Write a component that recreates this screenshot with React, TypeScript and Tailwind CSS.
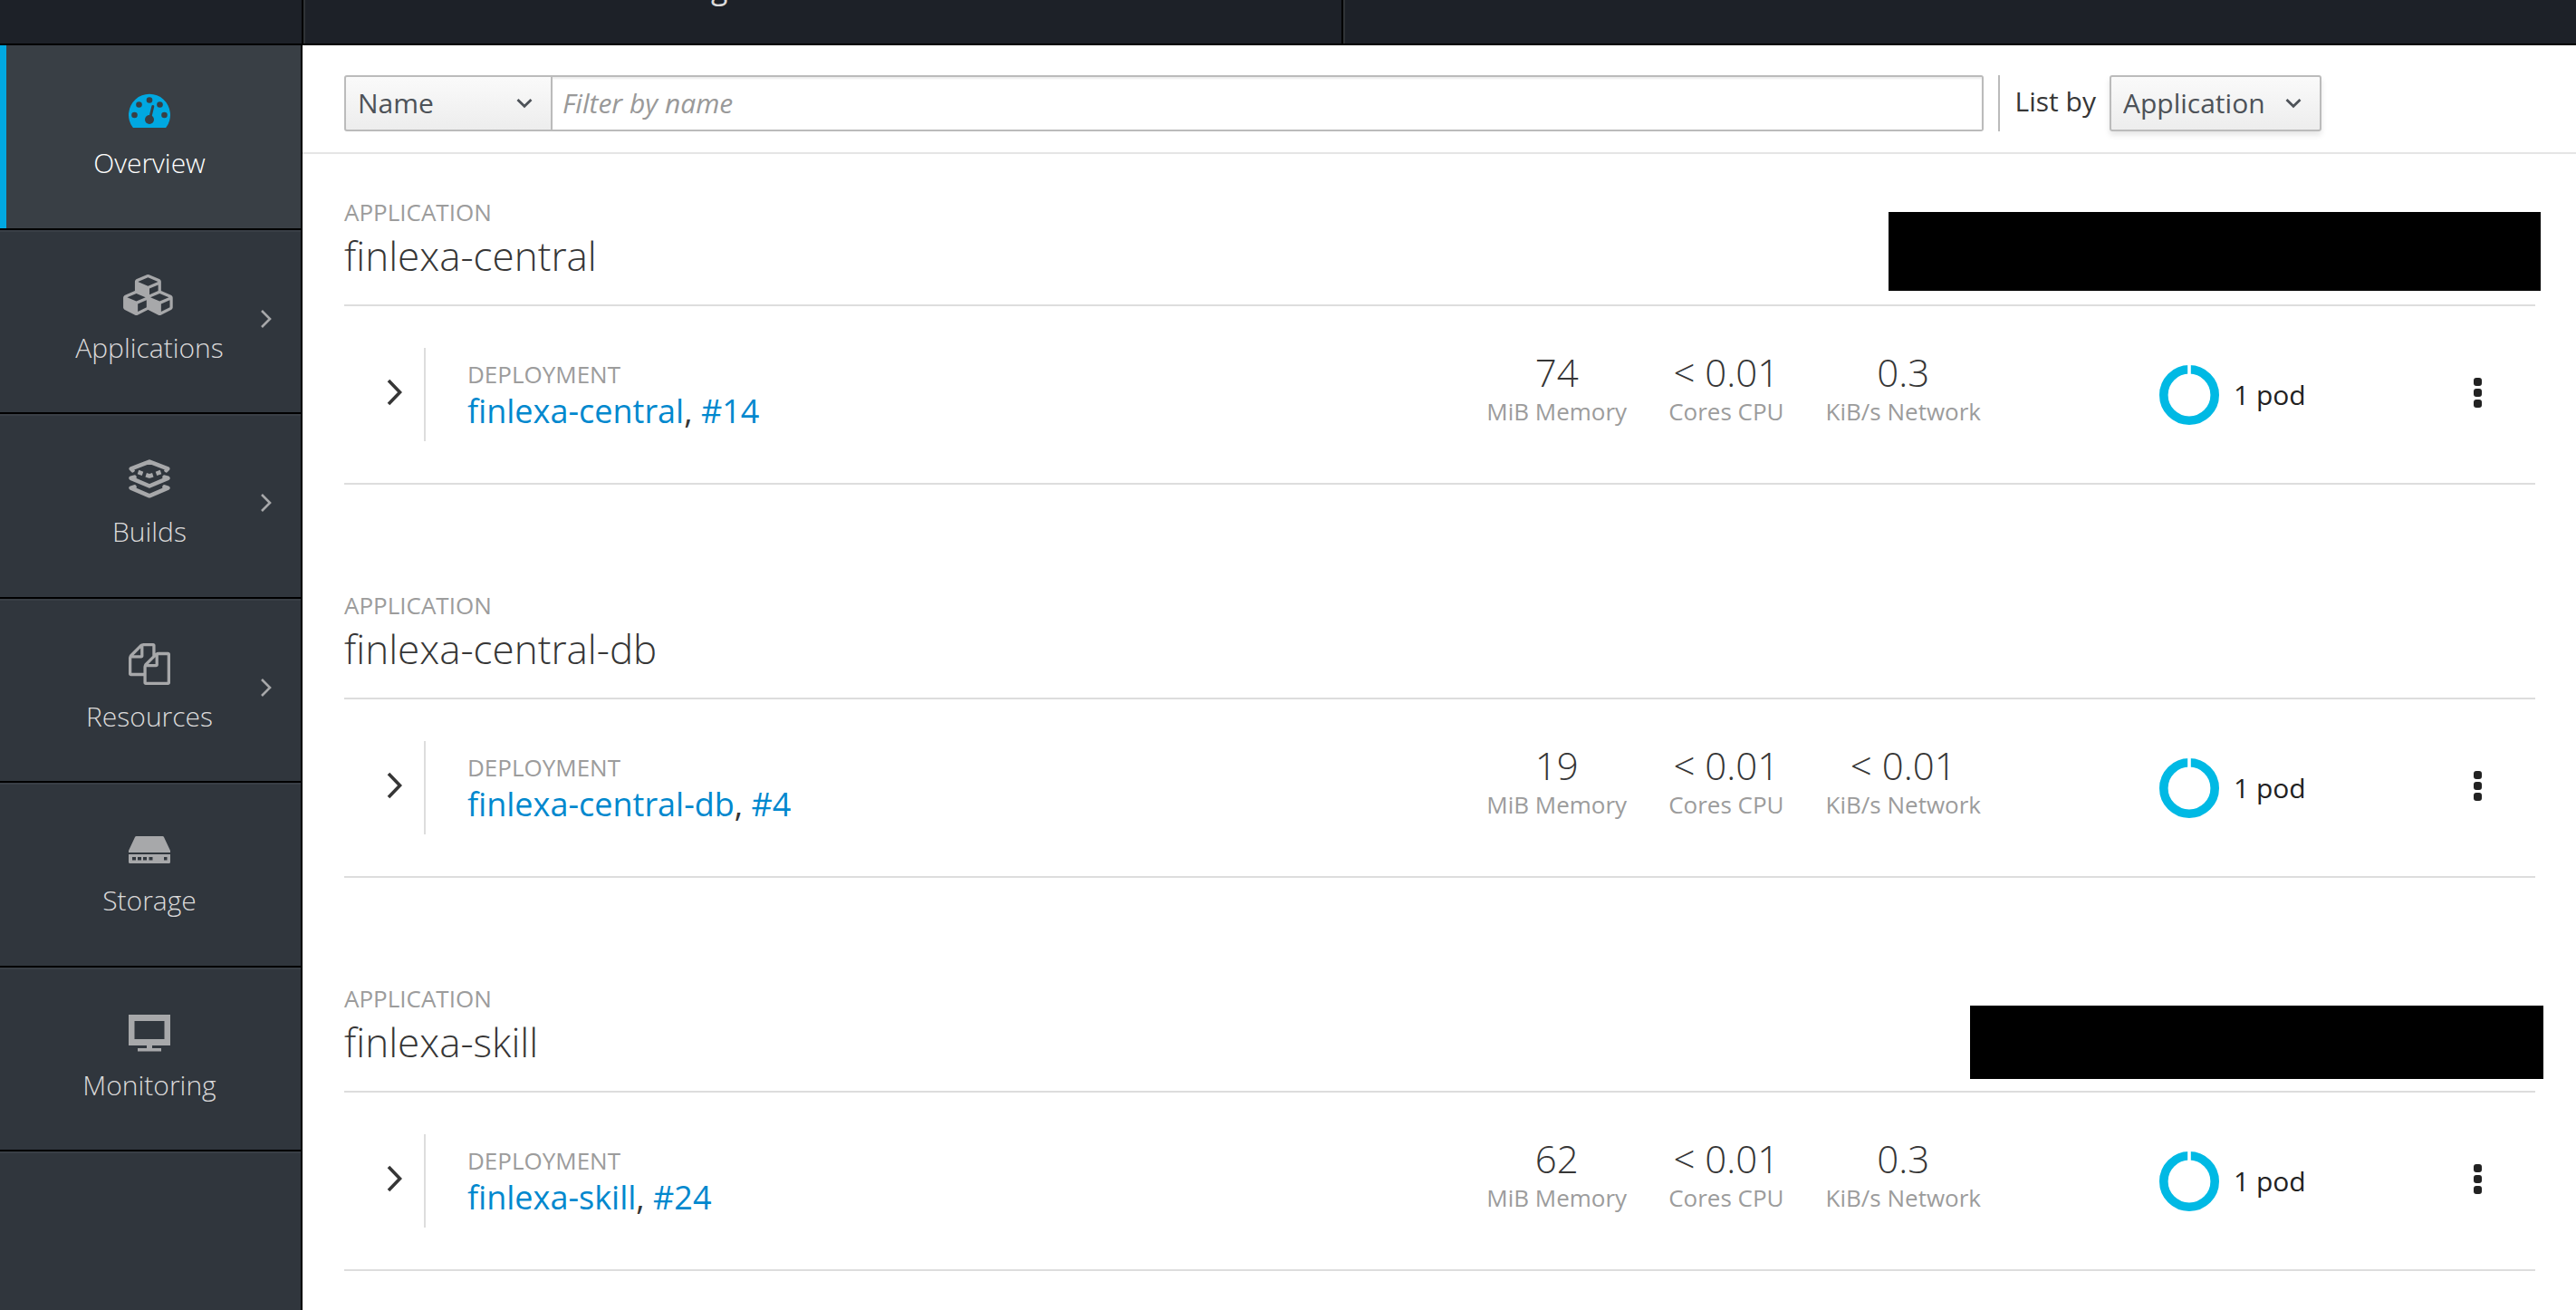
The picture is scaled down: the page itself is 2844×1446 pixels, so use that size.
import type { ReactNode } from "react";

function GaugeIcon() {
  return (
    <svg width="46" height="46" viewBox="0 0 46 46" aria-hidden="true">
      <path d="M4.5 41.5A23 23 0 1 1 41.5 41.5Q41 42 40 42H6Q5 42 4.5 41.5Z" fill="#00a8e1" />
      <g fill="#393f45">
        <circle cx="6.5" cy="28" r="3.3" />
        <circle cx="11.5" cy="16.5" r="3.3" />
        <circle cx="23" cy="11.5" r="3.3" />
        <circle cx="34.5" cy="16.5" r="3.3" />
        <circle cx="39.5" cy="28" r="3.3" />
        <circle cx="23" cy="33" r="5" />
      </g>
      <path d="M23.5 32L26.8 18.5" stroke="#393f45" strokeWidth="3" strokeLinecap="round" />
    </svg>
  );
}

function CubesIcon() {
  return (
    <svg width="58" height="45" viewBox="0 0 2304 1792" className="overflow-visible" fill="currentColor" aria-hidden="true">
      <path d="M640 1632l384-192v-314l-384 164v342zm-64-454l404-173-404-173-404 173zm1088 454l384-192v-314l-384 164v342zm-64-454l404-173-404-173-404 173zm-448-293l384-165v-266l-384 164v267zm-64-379l441-189-441-189-441 189zm1088 518v416q0 36-19 67t-52 47l-448 224q-25 14-57 14t-57-14l-448-224q-4-2-7-4-2 2-7 4l-448 224q-25 14-57 14t-57-14l-448-224q-33-16-52-47t-19-67v-416q0-38 21.5-70t56.5-48l434-186v-400q0-38 21.5-70t56.5-48l448-192q23-10 50-10t50 10l448 192q35 16 56.5 48t21.5 70v400l434 186q36 16 57 48t21 70z" />
    </svg>
  );
}

function BuildIcon() {
  return (
    <svg width="46" height="46" viewBox="0 0 46 46" fill="none" stroke="currentColor" strokeWidth="4.6" strokeLinejoin="round" strokeLinecap="round" aria-hidden="true">
      <path d="M4.5 13.2L2.8 11.4L23 3.6L43.2 11.4L41.5 13.2" />
      <path d="M10.5 15L15.5 16.8M30.500 16.8L35.500 15M19.2 18.2L23 19.5L26.8 18.2" strokeLinecap="butt" />
      <path d="M6.500 20.600L2.600 21.8L23 30.5L43.4 21.8L39.500 20.600" />
      <path d="M6.500 31.4L2.600 32.600L23 41.3L43.4 32.600L39.500 31.4" />
    </svg>
  );
}

function FilesIcon() {
  return (
    <svg width="46" height="46" viewBox="0 0 1792 1792" fill="currentColor" aria-hidden="true">
      <path d="M1696 384q40 0 68 28t28 68v1216q0 40-28 68t-68 28h-960q-40 0-68-28t-28-68v-288h-544q-40 0-68-28t-28-68v-672q0-40 20-88t48-76l408-408q28-28 76-48t88-20h416q40 0 68 28t28 68v328q68-40 128-40h416zm-544 213l-299 299h299v-299zm-640-384l-299 299h299v-299zm196 647l316-316v-416h-384v416q0 40-28 68t-68 28h-416v640h512v-256q0-40 20-88t48-76zm956 804v-1152h-384v416q0 40-28 68t-68 28h-416v640h896z" />
    </svg>
  );
}

function StorageIcon() {
  return (
    <svg width="46" height="46" viewBox="0 0 46 46" fill="currentColor" aria-hidden="true">
      <path d="M8.5 10H37.5Q38.5 10 39 11L46 26V28H0V26L7 11Q7.500 10 8.500 10Z" />
      <path fillRule="evenodd" d="M0 30H46V38.500Q46 40 44.500 40H1.500Q0 40 0 38.500ZM4 33V36.500H8V33ZM10 33V36.500H14V33ZM16 33V36.500H20V33ZM22.500 33V36.500H26.500V33ZM39 33V36.500H42.500V33Z" />
    </svg>
  );
}

function MonitorIcon() {
  return (
    <svg width="46" height="46" viewBox="0 0 46 46" fill="currentColor" aria-hidden="true">
      <path fillRule="evenodd" d="M0 3H46V37H0ZM6.500 10V30H39.500V10Z" />
      <path d="M20 37H26V40H36V43.500H10V40H20Z" />
    </svg>
  );
}

function CaretDown() {
  return (
    <svg width="18" height="12" viewBox="0 0 18 12" fill="none" stroke="#4d5258" strokeWidth="2.8" aria-hidden="true">
      <path d="M1.500 2L9 9.200L16.500 2" />
    </svg>
  );
}

type NavEntry = { label: string; icon: ReactNode; active?: boolean; submenu?: boolean };

const navEntries: NavEntry[] = [
  { label: "Overview", icon: <GaugeIcon />, active: true },
  { label: "Applications", icon: <CubesIcon />, submenu: true },
  { label: "Builds", icon: <BuildIcon />, submenu: true },
  { label: "Resources", icon: <FilesIcon />, submenu: true },
  { label: "Storage", icon: <StorageIcon /> },
  { label: "Monitoring", icon: <MonitorIcon /> },
];

function NavItem({ label, icon, active, submenu }: NavEntry) {
  return (
    <li className={active ? "border-b-2 border-black bg-[#393f45]" : "border-b-2 border-black"}>
      <a
        href={"#" + label.toLowerCase()}
        aria-current={active ? "page" : undefined}
        className="relative flex h-full flex-col items-center border-t-2 border-[#393f46] pt-[47px] pr-[2px] text-[#a7a8aa]"
      >
        {active && <span className="absolute -top-[2px] bottom-0 left-0 w-[7px] bg-[#00a8e1]" />}
        <span className="flex h-[46px] items-center">{icon}</span>
        <span className={active ? "mt-[15px] text-[30px] leading-[40px] font-light text-white" : "mt-[15px] text-[30px] leading-[40px] font-light text-[#dbdada]"}>
          {label}
        </span>
        {submenu && (
          <svg width="14" height="22" viewBox="0 0 14 22" className="absolute top-[85px] right-[31px]" fill="none" stroke="currentColor" strokeWidth="2.6" aria-hidden="true">
            <path d="M2 2L11 11L2 20" />
          </svg>
        )}
      </a>
    </li>
  );
}

type Metric = { value: string; unit: string };
type Application = { name: string; build: string; metrics: Metric[]; cover?: string };

const applications: Application[] = [
  {
    name: "finlexa-central",
    build: "#14",
    metrics: [
      { value: "74", unit: "MiB Memory" },
      { value: "< 0.01", unit: "Cores CPU" },
      { value: "0.3", unit: "KiB/s Network" },
    ],
    cover: "absolute top-[18px] -right-[6px] h-[87px] w-[720px] bg-black",
  },
  {
    name: "finlexa-central-db",
    build: "#4",
    metrics: [
      { value: "19", unit: "MiB Memory" },
      { value: "< 0.01", unit: "Cores CPU" },
      { value: "< 0.01", unit: "KiB/s Network" },
    ],
  },
  {
    name: "finlexa-skill",
    build: "#24",
    metrics: [
      { value: "62", unit: "MiB Memory" },
      { value: "< 0.01", unit: "Cores CPU" },
      { value: "0.3", unit: "KiB/s Network" },
    ],
    cover: "absolute top-[26px] -right-[9px] h-[81px] w-[633px] bg-black",
  },
];

function ApplicationSection({ name, build, metrics, cover }: Application) {
  return (
    <section>
      <header className="relative border-b-2 border-[#dddddd] pb-6">
        <p className="text-[26px] leading-[36px] text-[#9c9c9c] uppercase">Application</p>
        <h2 className="text-[44px] leading-[60px] font-light">{name}</h2>
        {cover && <div className={cover} />}
      </header>
      <div className="flex items-center border-b-2 border-[#dddddd] py-[46px]">
        <button type="button" aria-label={"Expand " + name} className="flex h-[103px] w-[90px] items-center justify-end border-r-2 border-[#dddddd] pr-[23px] pb-[6px]">
          <svg width="18" height="30" viewBox="0 0 18 30" fill="none" stroke="#363636" strokeWidth="3.6" aria-hidden="true">
            <path d="M2 2L14.500 15L2 28" />
          </svg>
        </button>
        <div className="flex-1 pl-[46px]">
          <p className="text-[26px] leading-[36px] text-[#9c9c9c] uppercase">Deployment</p>
          <p className="text-[36px] leading-[46px]">
            <a href={"#" + name} className="text-[#0088ce]">{name}</a>,{" "}
            <a href={"#" + name + "-" + build.slice(1)} className="text-[#0088ce]">{build}</a>
          </p>
        </div>
        <dl className="flex gap-[46px] pb-[14px] text-center">
          {metrics.map((m) => (
            <div key={m.unit} className="flex flex-col-reverse">
              <dt className="text-[26px] leading-[36px] text-[#9c9c9c]">{m.unit}</dt>
              <dd className="text-[42px] leading-[50px] font-light">{m.value}</dd>
            </div>
          ))}
        </dl>
        <div className="ml-[197px] flex w-[347px] items-center gap-4 text-[30px] leading-[40px] text-[#222222]">
          <svg width="66" height="66" viewBox="0 0 66 66" aria-hidden="true">
            <circle cx="33" cy="33" r="28.2" fill="none" stroke="#00b9e4" strokeWidth="9.600" />
            <path d="M33 0V11" stroke="#ffffff" strokeWidth="3.600" />
          </svg>
          1 pod
        </div>
        <button type="button" aria-label={"Actions for " + name} className="mr-[59px] flex flex-col gap-[3px] pb-1">
          <span className="size-[9px] rounded-[3px] bg-[#222222]" />
          <span className="size-[9px] rounded-[3px] bg-[#222222]" />
          <span className="size-[9px] rounded-[3px] bg-[#222222]" />
        </button>
      </div>
    </section>
  );
}

export default function App() {
  return (
    <div className="flex min-h-screen flex-col bg-white font-['Open_Sans',sans-serif] text-[#363636]">
      <header className="flex h-[50px] items-end overflow-hidden border-b-2 border-black bg-[#1d2128]">
        <div className="h-full w-[335px] border-r-2 border-black" />
        <div className="flex h-[124px] w-[1148px] items-center border-r-2 border-l-2 border-r-black border-l-[#2f3337] pl-[448px] text-[34px] text-[#dbdada]">
          g
        </div>
        <div className="h-full flex-1 border-l-2 border-[#2f3337]" />
      </header>

      <div className="flex flex-1">
        <nav aria-label="Main" className="w-[334px] shrink-0 border-r-2 border-black bg-[#30363d]">
          <ul className="grid min-h-[1221px] auto-rows-fr">
            {navEntries.map((entry) => (
              <NavItem key={entry.label} {...entry} />
            ))}
          </ul>
          <div className="border-t-2 border-[#393f46]" />
        </nav>

        <main className="min-w-0 flex-1">
          <form className="flex items-center border-b-2 border-[#e5e5e5] pt-[33px] pr-[281px] pb-[23px] pl-[46px] text-[30px]">
            <div className="relative flex items-center">
              <select aria-label="Filter field" className="h-[62px] w-[230px] appearance-none rounded-l-[3px] border-2 border-[#bbbbbb] bg-linear-to-b from-[#fafafa] to-[#ededed] pb-[2px] pl-[13px] text-[#4d5258]">
                <option>Name</option>
              </select>
              <span className="pointer-events-none absolute right-[22px]"><CaretDown /></span>
            </div>
            <input
              type="text"
              aria-label="Filter by name"
              placeholder="Filter by name"
              className="h-[62px] min-w-0 flex-1 rounded-r-[3px] border-2 border-l-0 border-[#bbbbbb] bg-white pb-[2px] pl-[11px] shadow-[inset_0_2px_2px_rgba(3,3,3,0.075)] placeholder:text-[#999999] placeholder:italic"
            />
            <div className="ml-4 flex h-[62px] items-center border-l-2 border-[#bbbbbb] pl-[17px]">
              <label htmlFor="list-by" className="pb-1 leading-[40px]">List by</label>
              <div className="relative ml-[15px] flex items-center">
                <select
                  id="list-by"
                  className="h-[62px] w-[234px] appearance-none rounded-[3px] border-2 border-[#bbbbbb] bg-linear-to-b from-[#fafafa] to-[#ededed] pb-[2px] pl-[13px] text-[#4d5258] shadow-[0_4px_6px_rgba(3,3,3,0.1)]"
                >
                  <option>Application</option>
                </select>
                <span className="pointer-events-none absolute right-[22px]"><CaretDown /></span>
              </div>
            </div>
          </form>

          <div className="flex flex-col gap-[115px] pt-[46px] pr-[45px] pl-[46px]">
            {applications.map((application) => (
              <ApplicationSection key={application.name} {...application} />
            ))}
          </div>
        </main>
      </div>
    </div>
  );
}
